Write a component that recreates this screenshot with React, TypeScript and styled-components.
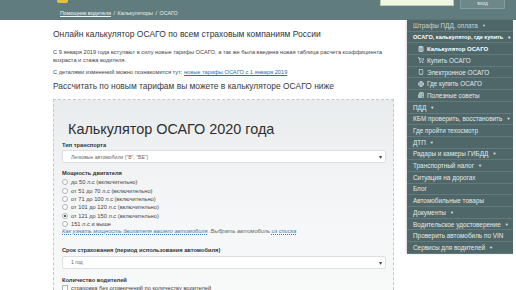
import styled, { createGlobalStyle } from "styled-components";
import { Calculator, ShoppingCart, Smartphone, Globe, Newspaper } from "lucide-react";

const GlobalStyle = createGlobalStyle`
  body {
    margin: 0;
    background: #fff;
    font-family: "Liberation Sans", Arial, sans-serif;
    color: #333;
    overflow: hidden;
  }
`;

const Header = styled.header`
  height: 20px;
  background-color: #617c7e;
  display: flex;
  justify-content: space-between;
  align-items: flex-start;
  padding: 0 11px 0 57px;
  box-sizing: border-box;
`;

const Left = styled.div`
  display: flex;
  flex-direction: column;
`;

const Logo = styled.div`
  width: 11px;
  height: 3px;
  background: #e2c23a;
  border-radius: 0 0 2px 2px;
`;

const Crumbs = styled.div`
  margin: 7px 0 0 3px;
  font-size: 5.4px;
  line-height: 7px;
  color: #e8eeee;
  a {
    color: #f4f7f7;
    text-decoration: underline;
  }
  span {
    margin: 0 2.5px;
  }
`;

const Right = styled.div`
  display: flex;
  gap: 6px;
`;

const Search = styled.div`
  width: 72px;
  height: 5px;
  background: #eef6e6;
  border: 1px solid #b8cfa6;
  border-top: none;
`;

const LoginBtn = styled.div`
  width: 43px;
  height: 8px;
  background: #6e8789;
  border: 1px solid #879c9e;
  border-top: none;
  color: #e3eaea;
  font-size: 5px;
  text-align: center;
  line-height: 6px;
`;

const Body = styled.div`
  display: flex;
  padding-left: 53px;
  gap: 13px;
`;

const Main = styled.main`
  width: 341px;
  flex-shrink: 0;
`;

const Title = styled.h1`
  margin: 8px 0 8px;
  font-size: 8.5px;
  line-height: 12px;
  font-weight: 400;
  color: #333;
  white-space: nowrap;
`;

const Text = styled.p`
  margin: 0 0 4px;
  font-size: 5.7px;
  line-height: 8px;
  color: #444;
  a {
    color: #2a6fb0;
    text-decoration: underline;
  }
`;

const SubTitle = styled.h2`
  margin: 4px 0 7px;
  font-size: 8.45px;
  line-height: 12px;
  font-weight: 400;
  color: #3a3a3a;
  white-space: nowrap;
`;

const Box = styled.section`
  border: 1px dashed #c4c8cb;
  border-bottom: none;
  background: linear-gradient(#e9ecee, #f5f6f7 55%, #f8f9f9);
  padding: 20px 7px 0 8px;
  min-height: 180px;
`;

const BoxTitle = styled.h3`
  margin: 0 0 3.5px 6px;
  font-size: 14.4px;
  line-height: 18px;
  font-weight: 400;
  color: #2e2e2e;
`;

const Label = styled.div`
  font-size: 5.7px;
  font-weight: 700;
  line-height: 7px;
  color: #333;
  white-space: nowrap;
`;

const Select = styled.div`
  height: 11px;
  margin: 1.5px 0 0;
  background: #fff;
  border: 1px solid #dcdfe2;
  border-radius: 2px;
  display: flex;
  align-items: center;
  justify-content: space-between;
  padding: 0 3px 0 8px;
  font-size: 5.1px;
  color: #666;
  &::after {
    content: "▾";
    font-size: 6px;
    color: #444;
  }
`;

const Field = styled.div<{ gap: number }>`
  margin-top: ${(p) => p.gap}px;
`;

const Radios = styled.div`
  display: flex;
  flex-direction: column;
  margin-top: 1px;
`;

const RadioRow = styled.div`
  display: flex;
  align-items: center;
  gap: 3px;
  height: 8.4px;
  font-size: 5.7px;
  color: #444;
  white-space: nowrap;
`;

const Dot = styled.span<{ checked?: boolean }>`
  width: 4px;
  height: 4px;
  border-radius: 50%;
  border: 0.6px solid #b0b4b8;
  background: #fff;
  display: flex;
  align-items: center;
  justify-content: center;
  &::after {
    content: "";
    width: 2px;
    height: 2px;
    border-radius: 50%;
    background: ${(p) => (p.checked ? "#222" : "transparent")};
  }
`;

const Check = styled(Dot)`
  border-radius: 0;
`;

const Hint = styled.div`
  font-size: 5.6px;
  font-style: italic;
  color: #666;
  line-height: 7.6px;
  white-space: nowrap;
  a {
    color: #3d79b4;
    text-decoration: underline dotted;
  }
`;

const Menu = styled.nav`
  width: 106px;
  flex-shrink: 0;
  background: #4f6769;
  box-shadow: -1px 0 2px rgba(0, 0, 0, 0.15);
  align-self: flex-start;
`;

const Item = styled.div<{ sub?: boolean; active?: boolean; dim?: boolean; top?: boolean }>`
  height: 11.7px;
  box-sizing: border-box;
  border-bottom: 1px solid #627a7c;
  display: flex;
  align-items: center;
  gap: 3px;
  padding-left: ${(p) => (p.sub ? 11 : 6)}px;
  font-size: ${(p) => (p.top ? 5.6 : p.active ? 6 : 6.4)}px;
  white-space: nowrap;
  overflow: hidden;
  font-weight: ${(p) => (p.active ? 700 : 400)};
  color: ${(p) => (p.active ? "#fff" : p.dim ? "#c9d5d5" : "#e2eaea")};
  svg {
    flex-shrink: 0;
  }
`;

const Caret = styled.span`
  font-size: 4px;
  margin-left: 1px;
`;

const powers = [
  "до 50 л.с (включительно)",
  "от 51 до 70 л.с (включительно)",
  "от 71 до 100 л.с (включительно)",
  "от 101 до 120 л.с (включительно)",
  "от 121 до 150 л.с (включительно)",
  "151 л.с и выше",
];

const menu: { t: string; caret?: boolean }[] = [
  { t: "ПДД", caret: true },
  { t: "КБМ проверить, восстановить", caret: true },
  { t: "Где пройти техосмотр" },
  { t: "ДТП", caret: true },
  { t: "Радары и камеры ГИБДД", caret: true },
  { t: "Транспортный налог", caret: true },
  { t: "Ситуация на дорогах" },
  { t: "Блог" },
  { t: "Автомобильные товары" },
  { t: "Документы", caret: true },
  { t: "Водительское удостоверение", caret: true },
  { t: "Проверить автомобиль по VIN" },
  { t: "Сервисы для водителей", caret: true },
];

const subs = [
  { t: "Калькулятор ОСАГО", Icon: Calculator, active: true },
  { t: "Купить ОСАГО", Icon: ShoppingCart },
  { t: "Электронное ОСАГО", Icon: Smartphone },
  { t: "Где купить ОСАГО", Icon: Globe },
  { t: "Полезные советы", Icon: Newspaper },
];

export default function App() {
  return (
    <>
      <GlobalStyle />
      <Header>
        <Left>
          <Logo />
          <Crumbs>
            <a>Помощник водителя</a>
            <span>/</span>Калькуляторы<span>/</span>ОСАГО
          </Crumbs>
        </Left>
        <Right>
          <Search />
          <LoginBtn>вход</LoginBtn>
        </Right>
      </Header>
      <Body>
        <Main>
          <Title>Онлайн калькулятор ОСАГО по всем страховым компаниям России</Title>
          <Text>
            С 9 января 2019 года вступают в силу новые тарифы ОСАГО, а так же была введена новая таблица расчета
            коэффициента возраста и стажа водителя.
          </Text>
          <Text>
            С деталями изменений можно познакомится тут: <a>новые тарифы ОСАГО с 1 января 2019</a>
          </Text>
          <SubTitle>Рассчитать по новым тарифам вы можете в калькуляторе ОСАГО ниже</SubTitle>
          <Box>
            <BoxTitle>Калькулятор ОСАГО 2020 года</BoxTitle>
            <Label>Тип транспорта</Label>
            <Select>Легковые автомобили ("B", "BE")</Select>
            <Field gap={7}>
              <Label>Мощность двигателя</Label>
              <Radios>
                {powers.map((p, i) => (
                  <RadioRow key={p}>
                    <Dot checked={i === 4} />
                    {p}
                  </RadioRow>
                ))}
              </Radios>
              <Hint>
                <a>Как узнать мощность двигателя вашего автомобиля</a>. Выбрать автомобиль <a>из списка</a>
              </Hint>
            </Field>
            <Field gap={11.5}>
              <Label>Срок страхования (период использования автомобиля)</Label>
              <Select>1 год</Select>
            </Field>
            <Field gap={8}>
              <Label>Количество водителей</Label>
              <RadioRow>
                <Check />
                страховка без ограничений по количеству водителей
              </RadioRow>
            </Field>
          </Box>
        </Main>
        <Menu>
          <Item dim>
            Штрафы ПДД, оплата<Caret>▼</Caret>
          </Item>
          <Item active top>
            ОСАГО, калькулятор, где купить<Caret>▼</Caret>
          </Item>
          {subs.map(({ t, Icon, active }) => (
            <Item sub active={active} key={t}>
              <Icon size={6} strokeWidth={2.5} />
              {t}
            </Item>
          ))}
          {menu.map((m) => (
            <Item key={m.t}>
              {m.t}
              {m.caret && <Caret>▼</Caret>}
            </Item>
          ))}
        </Menu>
      </Body>
    </>
  );
}
